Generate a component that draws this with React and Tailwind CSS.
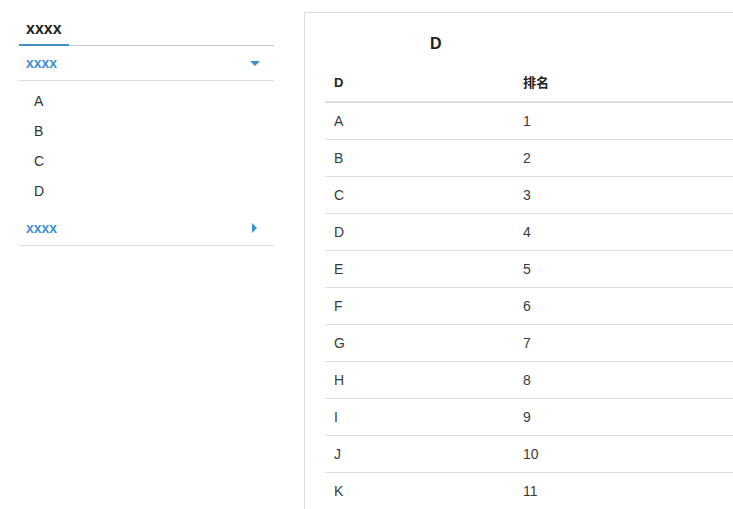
import React from "react";

const rows = [
  ["A", 1],
  ["B", 2],
  ["C", 3],
  ["D", 4],
  ["E", 5],
  ["F", 6],
  ["G", 7],
  ["H", 8],
  ["I", 9],
  ["J", 10],
  ["K", 11],
];

const menuItems = ["A", "B", "C", "D"];

const SectionHeader = ({ label, open }) => (
  <div className="h-[35px] flex items-center justify-between pl-[7px] pr-[14px] border-b border-[#dcdcdc] cursor-pointer">
    <span className="text-[14px] font-bold text-[#3c8fd0] leading-[20px]">{label}</span>
    {open ? (
      <span className="w-0 h-0 border-l-[5px] border-r-[5px] border-t-[5px] border-l-transparent border-r-transparent border-t-[#3c8fd0]" />
    ) : (
      <span className="w-0 h-0 border-t-[5px] border-b-[5px] border-l-[5px] border-t-transparent border-b-transparent border-l-[#3c8fd0] mr-[3px]" />
    )}
  </div>
);

const App = () => {
  return (
    <div
      className="flex w-[733px] h-[509px] overflow-hidden bg-white text-[#333]"
      style={{ fontFamily: '"Liberation Sans", "Noto Sans CJK SC", Arial, sans-serif' }}
    >
      {/* sidebar */}
      <div className="ml-[19px] w-[255px] shrink-0">
        <div className="flex border-b border-[#c8c8c8]">
          <div className="w-[50px] px-[7px] pt-[19px] pb-[5px] -mb-px border-b-2 border-[#3c8fd0] text-[16px] font-bold leading-[20px] text-[#222]">
            xxxx
          </div>
        </div>
        <SectionHeader label="xxxx" open />
        <ul className="py-[5px]">
          {menuItems.map((item) => (
            <li key={item} className="h-[30px] flex items-center pl-[15px] text-[14px] text-[#333]">
              {item}
            </li>
          ))}
        </ul>
        <SectionHeader label="xxxx" />
      </div>

      {/* main panel */}
      <div className="ml-[30px] mt-[12px] w-[460px] shrink-0 border-l border-t border-[#dddddd] pl-[20px]">
        <h2 className="pl-[105px] pt-[21px] text-[16px] font-bold leading-[20px] text-[#222]">D</h2>
        <div className="mt-[11px] w-[440px]">
          <div className="grid grid-cols-[189px_1fr] border-b-2 border-[#dddddd]">
            <div className="px-[9px] py-[8px] text-[13px] font-bold leading-[20px] text-[#222]">D</div>
            <div className="px-[9px] py-[8px] text-[13px] font-bold leading-[20px] text-[#222]">排名</div>
          </div>
          {rows.map(([name, rank]) => (
            <div key={name} className="grid grid-cols-[189px_1fr] border-b border-[#dddddd]">
              <div className="px-[9px] py-[8px] text-[14px] leading-[20px] text-[#3a3a3a]">{name}</div>
              <div className="px-[9px] py-[8px] text-[14px] leading-[20px] text-[#3a3a3a]">{rank}</div>
            </div>
          ))}
        </div>
      </div>
    </div>
  );
};

export default App;
